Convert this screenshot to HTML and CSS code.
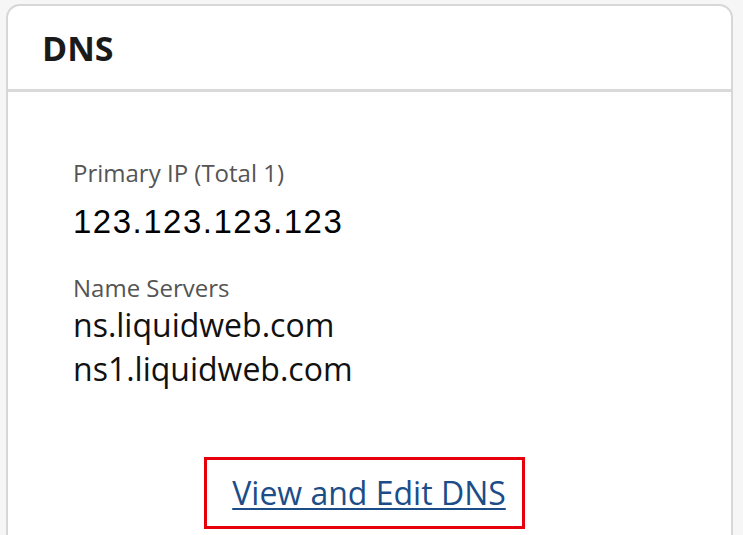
FILE: index.html
```html
<!DOCTYPE html>
<html>
<head>
  <title>DNS</title>
  <link rel="stylesheet" href="styles.css">
</head>
<body>
  <div class="card">
    <div class="card-header">
      <h2>DNS</h2>
    </div>
    <div class="card-body">
      <div class="field">
        <div class="label">Primary IP (Total 1)</div>
        <div class="ip">123.123.123.123</div>
      </div>
      <div class="field">
        <div class="label">Name Servers</div>
        <div class="ns">ns.liquidweb.com</div>
        <div class="ns">ns1.liquidweb.com</div>
      </div>
      <div class="actions">
        <a class="edit-link" href="#">View and Edit DNS</a>
      </div>
    </div>
  </div>
</body>
</html>
```

FILE: styles.css
```css
body {
  margin: 0;
  background-color: #f6f6f6;
  font-family: "Open Sans", sans-serif;
  height: 535px;
  overflow: hidden;
}
.card {
  margin: 4px 0 0 6px;
  width: 723px;
  height: 560px;
  background: #fff;
  border: 2px solid #d7d7d7;
  border-radius: 14px 14px 0 0;
}
.card-header {
  height: 83px;
  display: flex;
  align-items: center;
  padding-left: 34px;
  border-bottom: 3px solid #d9d9d9;
}
.card-header h2 {
  margin: 0;
  font-size: 34px;
  font-weight: 700;
  color: #1a1a1a;
}
.card-body {
  padding: 66px 0 0 65px;
}
.field {
  margin-bottom: 29px;
}
.field:last-of-type {
  margin-bottom: 0;
}
.label {
  font-size: 24px;
  color: #555;
  line-height: 30px;
}
.ip {
  font-family: "Liberation Sans", Arial, sans-serif;
  font-size: 33px;
  letter-spacing: 1.5px;
  color: #000;
  line-height: 44px;
  margin-top: 12px;
}
.ns {
  font-size: 32px;
  color: #111;
  line-height: 44px;
}
.actions {
  display: flex;
  justify-content: center;
  padding-right: 75px;
  margin-top: 66px;
}
.edit-link {
  display: inline-block;
  padding: 11px 16px 11px 25px;
  border: 3px solid #e5000c;
  font-size: 32px;
  line-height: 44px;
  color: #1b4d88;
  text-decoration: underline;
  text-decoration-thickness: 2px;
  text-underline-offset: 3px;
}
```
